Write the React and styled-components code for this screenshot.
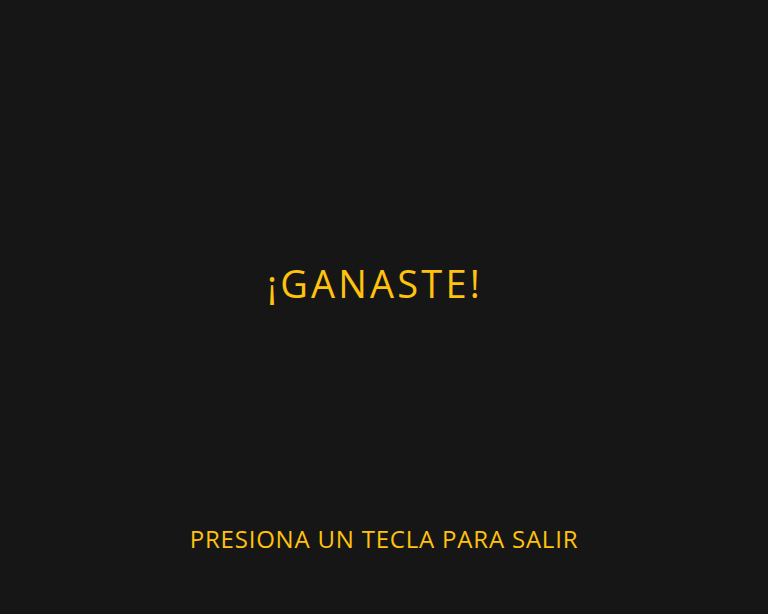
import styled, { createGlobalStyle } from 'styled-components';

const GlobalStyle = createGlobalStyle`
    html, body {
        margin: 0;
        padding: 0;
        background: #161616;
    }
`;

const Screen = styled.div`
    width: 100vw;
    height: 100vh;
    background: #161616;
    display: flex;
    flex-direction: column;
    align-items: center;
    font-family: "Open Sans", "Liberation Sans", sans-serif;
    color: #ffc20e;
    box-sizing: border-box;
    padding-top: 257px;
`;

const Title = styled.h1`
    margin: 0 18px 0 0;
    font-size: 38px;
    font-weight: 400;
    line-height: 52px;
    letter-spacing: 3.2px;
`;

const Hint = styled.p`
    margin: 0;
    margin-top: auto;
    margin-bottom: 59px;
    font-size: 24px;
    font-weight: 400;
    line-height: 33px;
    letter-spacing: 0.8px;
`;

export default function App(){
    return(
        <>
            <GlobalStyle/>
            <Screen>
                <Title>¡GANASTE!</Title>
                <Hint>PRESIONA UN TECLA PARA SALIR</Hint>
            </Screen>
        </>
    );
}
